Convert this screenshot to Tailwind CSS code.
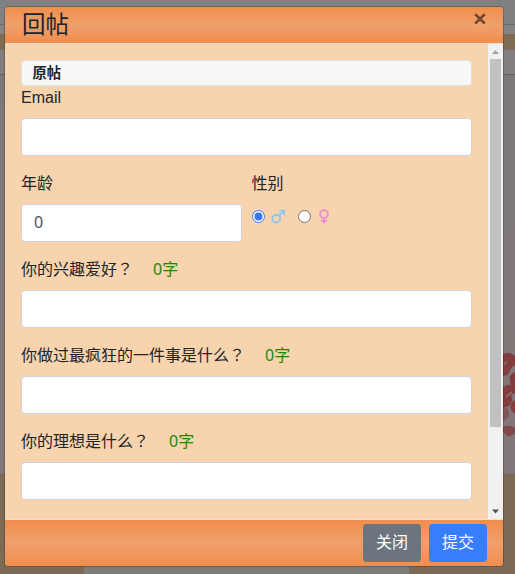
<!DOCTYPE html>
<html lang="zh-CN">
<head>
<meta charset="utf-8">
<title>回帖</title>
<script src="https://cdn.jsdelivr.net/npm/@tailwindcss/browser@4"></script>
</head>
<body class="relative h-[574px] w-[515px] overflow-hidden bg-[#817c7b] font-['Liberation_Sans','Noto_Sans_CJK_SC',sans-serif] text-base text-[#212529]">
<!-- dimmed page behind the dialog -->
<div class="absolute inset-0 flex flex-col">
  <div class="h-[25px] border-b border-[#6a6a6a] bg-[#808080]"></div>
  <div class="h-[9px] bg-[#858483]"></div>
  <div class="h-[16px] border-b border-[#77706c] bg-[#7f6c53]"></div>
  <div class="h-[25px] border-b border-[#655d5d] bg-[#827d7e]"></div>
  <div class="flex-1 border-b border-[#6d6666] bg-gradient-to-b from-[#7d7878] to-[#827778]"></div>
  <div class="flex h-[99px] justify-center bg-[#7d6a55] pr-[22px]"><div class="w-[325px] bg-[#7e7c79]"></div></div>
</div>
<svg class="absolute left-[503px] top-[350px]" width="12" height="110" viewBox="0 0 12 110"><g fill="#843c3f"><path d="M0 4Q7 1 12 6V15Q8 17 6 23Q4 26 0 26z"/><path d="M12 22Q5 24 7 32Q9 38 12 39z"/><path d="M0 37Q8 32 12 38V43L8 45Q11 51 6 56L0 58z"/><path d="M12 50Q6 53 8 60L12 64z"/></g><path d="M0 58Q7 56 6 66L0 72z" fill="#805557"/><path d="M0 77Q7 74 12 78V83Q6 90 0 82z" fill="#81494b"/><path d="M1 15l3-4M3 47l6-5" stroke="#8a6667" stroke-width="2"/></svg>

<div class="absolute left-[4px] top-[6px] flex h-[561px] w-[500px] flex-col overflow-hidden rounded-[5px] border border-black/20 bg-[#f7d3ae] bg-clip-padding">
  <header class="flex h-[37px] shrink-0 justify-between border-b border-[#eedfd0] bg-gradient-to-b from-[#f08d4c] via-[#f0a06c] to-[#f08d4c] pl-[17px] pr-[16px]">
    <h5 class="text-[23.5px] leading-[36px]">回帖</h5>
    <button class="flex h-[24px] w-[14px] items-center justify-center" aria-label="关闭"><svg width="14" height="14" viewBox="0 0 14 14" class="overflow-visible"><path d="M2.2 3.2l9.6 9.6M11.8 3.2L2.2 12.8" stroke="#f8cba8" stroke-width="2.6"/><path d="M2.2 2.2l9.6 9.6M11.8 2.2L2.2 11.8" stroke="#784626" stroke-width="2.8"/></svg></button>
  </header>
  <div class="flex h-[475px] shrink-0">
    <form class="w-[483px] px-[16px] pt-[16px]">
      <div class="h-[26px] rounded-[4px] border border-[#dfdfdf] bg-[#f7f7f7] pl-[10.5px] text-[14.3px] font-bold leading-[24px]">原帖</div>
      <div class="mb-4"><label class="mb-2 block h-6 leading-6">Email</label><input class="block h-[38px] w-full rounded-[4px] border border-[#ced4da] bg-white"></div>
      <div class="mb-4 grid grid-cols-2 gap-[10px]">
        <div><label class="mb-2 block h-6 leading-6">年龄</label><input value="0" class="block h-[38px] w-full rounded-[4px] border border-[#ced4da] bg-white px-3 pb-[2px] font-['Noto_Sans'] text-[#495057]"></div>
        <div><label class="mb-2 block h-6 leading-6">性别</label>
          <div class="flex h-[24px] items-center">
            <svg width="13" height="13" viewBox="0 0 13 13"><circle cx="6.5" cy="6.5" r="6" fill="#fff" stroke="#3778f5"/><circle cx="6.5" cy="6.5" r="4" fill="#3778ff"/></svg>
            <svg class="ml-[6px]" width="15" height="16" viewBox="0 0 15 16" fill="none" stroke="#8dc7ef" stroke-width="1.9"><circle cx="5.3" cy="10.6" r="3.9"/><path d="M8.2 7.7L13 2.9M8.4 2.6h4.8v4.8"/></svg>
            <svg class="ml-[12px]" width="13" height="13" viewBox="0 0 13 13"><circle cx="6.5" cy="6.5" r="6" fill="#fff" stroke="#767676"/></svg>
            <svg class="ml-[7px]" width="12" height="16" viewBox="0 0 12 16" fill="none" stroke="#ee8fcb" stroke-width="1.9"><circle cx="6" cy="6.1" r="3.9"/><path d="M6 10v5.5M2.9 12.8h6.2"/></svg>
          </div>
        </div>
      </div>
      <div class="mb-4"><label class="mb-2 flex h-6 gap-5 leading-6"><span>你的兴趣爱好<span lang="zh-TW" class="font-['Noto_Sans_CJK_TC',sans-serif] leading-none">？</span></span><span class="font-['Noto_Sans','Noto_Sans_CJK_SC',sans-serif] leading-[22px] text-[#278700]">0字</span></label><input class="block h-[38px] w-full rounded-[4px] border border-[#ced4da] bg-white"></div>
      <div class="mb-4"><label class="mb-2 flex h-6 gap-5 leading-6"><span>你做过最疯狂的一件事是什么<span lang="zh-TW" class="font-['Noto_Sans_CJK_TC',sans-serif] leading-none">？</span></span><span class="font-['Noto_Sans','Noto_Sans_CJK_SC',sans-serif] leading-[22px] text-[#278700]">0字</span></label><input class="block h-[38px] w-full rounded-[4px] border border-[#ced4da] bg-white"></div>
      <div><label class="mb-2 flex h-6 gap-5 leading-6"><span>你的理想是什么<span lang="zh-TW" class="font-['Noto_Sans_CJK_TC',sans-serif] leading-none">？</span></span><span class="font-['Noto_Sans','Noto_Sans_CJK_SC',sans-serif] leading-[22px] text-[#278700]">0字</span></label><input class="block h-[38px] w-full rounded-[4px] border border-[#ced4da] bg-white"></div>
    </form>
    <div class="flex w-[15px] flex-col items-center bg-[#f1f1f1]">
      <svg class="shrink-0" width="15" height="15" viewBox="0 0 15 15"><path d="M4 10l3.5-4L11 10z" fill="#a3a3a3"/></svg>
      <div class="h-[368px] w-[11px] bg-[#c1c1c1]"></div>
      <svg class="mt-auto shrink-0" width="15" height="15" viewBox="0 0 15 15"><path d="M4 5.5l3.5 4 3.5-4z" fill="#505050"/></svg>
    </div>
  </div>
  <footer class="flex flex-1 justify-end gap-2 border-t border-[#eedfd0] bg-gradient-to-b from-[#f08d4c] via-[#f0a06c] to-[#f08d4c] pr-[16px] pt-[4px] text-white">
    <button class="h-[38px] w-[58px] rounded-[4px] bg-[#6c757d] leading-[38px]">关闭</button>
    <button class="h-[38px] w-[58px] rounded-[4px] bg-[#377dff] leading-[38px]">提交</button>
  </footer>
</div>
</body>
</html>
